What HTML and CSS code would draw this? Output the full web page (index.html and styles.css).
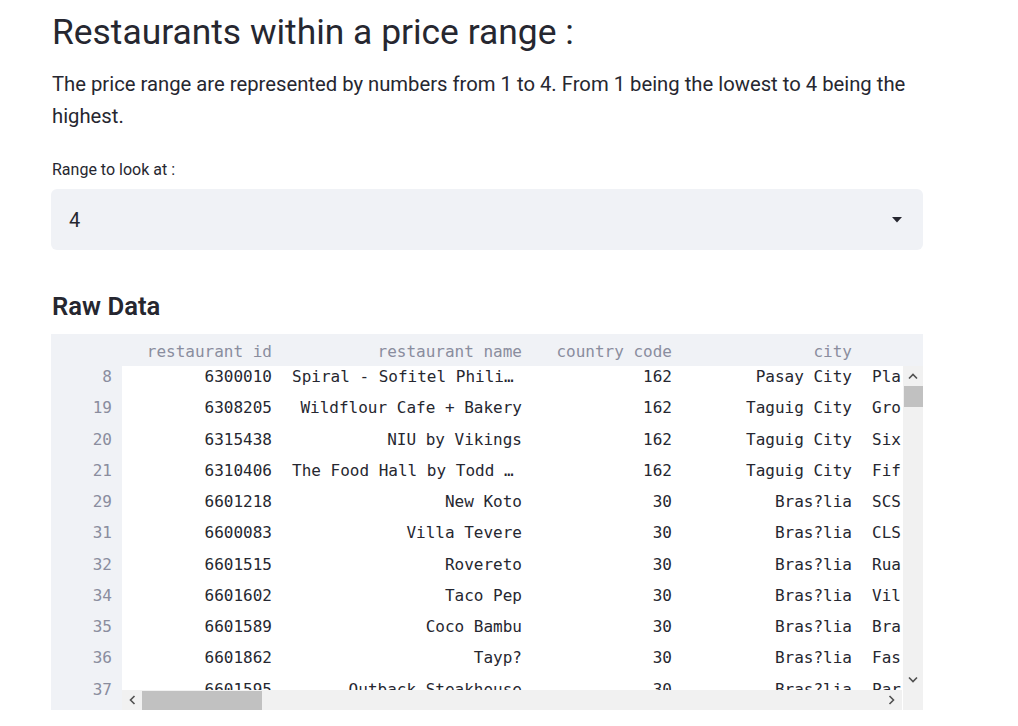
FILE: index.html
```html
<!DOCTYPE html>
<html>
<head>
<meta charset="utf-8">
<link rel="stylesheet" href="styles.css">
</head>
<body>
<main class="page">
  <h1 class="title">Restaurants within a price range :</h1>
  <p class="intro">The price range are represented by numbers from 1 to 4. From 1 being the lowest to 4 being the highest.</p>
  <label class="field-label">Range to look at :</label>
  <div class="select">
    <span class="select-value">4</span>
    <svg class="select-arrow" width="10" height="6" viewBox="0 0 10 6"><path d="M0 0H10L5 5.5Z" fill="#262730"/></svg>
  </div>
  <h3 class="section">Raw Data</h3>
  <div class="frame">
    <div class="head">
      <div class="hcell c1">restaurant id</div>
      <div class="hcell c2">restaurant name</div>
      <div class="hcell c3">country code</div>
      <div class="hcell c4">city</div>
    </div>
    <div class="corner-top"></div>
    <div class="index">
      <div class="icell">8</div><div class="icell">19</div><div class="icell">20</div><div class="icell">21</div><div class="icell">29</div><div class="icell">31</div><div class="icell">32</div><div class="icell">34</div><div class="icell">35</div><div class="icell">36</div><div class="icell">37</div>
    </div>
    <div class="body">
      <div class="row"><div class="cell c1">6300010</div><div class="cell c2 trunc">Spiral - Sofitel Phili…</div><div class="cell c3">162</div><div class="cell c4">Pasay City</div><div class="cell c5">Pla</div></div>
      <div class="row"><div class="cell c1">6308205</div><div class="cell c2">Wildflour Cafe + Bakery</div><div class="cell c3">162</div><div class="cell c4">Taguig City</div><div class="cell c5">Gro</div></div>
      <div class="row"><div class="cell c1">6315438</div><div class="cell c2">NIU by Vikings</div><div class="cell c3">162</div><div class="cell c4">Taguig City</div><div class="cell c5">Six</div></div>
      <div class="row"><div class="cell c1">6310406</div><div class="cell c2 trunc">The Food Hall by Todd …</div><div class="cell c3">162</div><div class="cell c4">Taguig City</div><div class="cell c5">Fif</div></div>
      <div class="row"><div class="cell c1">6601218</div><div class="cell c2">New Koto</div><div class="cell c3">30</div><div class="cell c4">Bras?lia</div><div class="cell c5">SCS</div></div>
      <div class="row"><div class="cell c1">6600083</div><div class="cell c2">Villa Tevere</div><div class="cell c3">30</div><div class="cell c4">Bras?lia</div><div class="cell c5">CLS</div></div>
      <div class="row"><div class="cell c1">6601515</div><div class="cell c2">Rovereto</div><div class="cell c3">30</div><div class="cell c4">Bras?lia</div><div class="cell c5">Rua</div></div>
      <div class="row"><div class="cell c1">6601602</div><div class="cell c2">Taco Pep</div><div class="cell c3">30</div><div class="cell c4">Bras?lia</div><div class="cell c5">Vil</div></div>
      <div class="row"><div class="cell c1">6601589</div><div class="cell c2">Coco Bambu</div><div class="cell c3">30</div><div class="cell c4">Bras?lia</div><div class="cell c5">Bra</div></div>
      <div class="row"><div class="cell c1">6601862</div><div class="cell c2">Tayp?</div><div class="cell c3">30</div><div class="cell c4">Bras?lia</div><div class="cell c5">Fas</div></div>
      <div class="row"><div class="cell c1">6601595</div><div class="cell c2">Outback Steakhouse</div><div class="cell c3">30</div><div class="cell c4">Bras?lia</div><div class="cell c5">Par</div></div>
    </div>
    <div class="vscroll">
      <svg class="arrow" width="10" height="7" viewBox="0 0 10 7"><path d="M1 5.5L5 1.5L9 5.5" fill="none" stroke="#505050" stroke-width="1.6"/></svg>
      <div class="vthumb"></div>
      <div class="spacer"></div>
      <svg class="arrow" width="10" height="7" viewBox="0 0 10 7"><path d="M1 1.5L5 5.5L9 1.5" fill="none" stroke="#505050" stroke-width="1.6"/></svg>
    </div>
    <div class="hscroll">
      <svg class="harrow" width="7" height="10" viewBox="0 0 7 10"><path d="M5.5 1L1.5 5L5.5 9" fill="none" stroke="#505050" stroke-width="1.6"/></svg>
      <div class="hthumb"></div>
      <div class="spacer"></div>
      <svg class="harrow" width="7" height="10" viewBox="0 0 7 10"><path d="M1.5 1L5.5 5L1.5 9" fill="none" stroke="#505050" stroke-width="1.6"/></svg>
    </div>
    <div class="corner"></div>
  </div>
</main>
</body>
</html>
```

FILE: styles.css
```css
html, body {
  margin: 0;
  padding: 0;
  background: #ffffff;
}
body {
  font-family: "Roboto", "Noto Sans", sans-serif;
  color: #262730;
}
.page {
  width: 872px;
  padding: 8px 0 0 51px;
  display: flex;
  flex-direction: column;
}
.title {
  font-weight: 400;
  font-size: 35.4px;
  line-height: 48px;
  margin: 0 0 0 1px;
  color: #262730;
}
.intro {
  font-size: 20.25px;
  line-height: 32px;
  margin: 12px 0 0 1px;
  color: #262730;
}
.field-label {
  font-size: 16px;
  line-height: 20px;
  margin: 28px 0 0 1px;
  color: #262730;
}
.select {
  margin-top: 9px;
  height: 61px;
  background: #f0f2f6;
  border-radius: 6px;
  display: flex;
  align-items: center;
  padding: 0 21px 0 18px;
}
.select-value {
  font-size: 20px;
  flex: 1;
}
.section {
  font-weight: 600;
  font-size: 25.7px;
  line-height: 36px;
  margin: 38px 0 0 1px;
  color: #262730;
}
.frame {
  margin-top: 10px;
  height: 376px;
  display: grid;
  grid-template-columns: 71px 780px 21px;
  grid-template-rows: 32px 324px 20px;
  background: #f0f2f6;
  font-family: "DejaVu Sans Mono", "Liberation Mono", monospace;
  font-size: 16px;
}
.head {
  grid-column: 2;
  grid-row: 1;
  display: flex;
  overflow: hidden;
  white-space: nowrap;
  color: #8a8d9e;
  align-items: center;
  padding-top: 2px;
}
.corner-top {
  grid-column: 3;
  grid-row: 1;
}
.index {
  grid-column: 1;
  grid-row: 2 / 4;
  overflow: hidden;
  color: #8a8d9e;
}
.icell {
  height: 31.25px;
  line-height: 22px;
  text-align: right;
  padding-right: 10px;
}
.body {
  grid-column: 2;
  grid-row: 2;
  background: #ffffff;
  overflow: hidden;
}
.row {
  display: flex;
  height: 31.25px;
  line-height: 22px;
  white-space: nowrap;
  color: #262730;
}
.cell, .hcell {
  flex: none;
  padding-right: 10px;
  box-sizing: border-box;
  text-align: right;
  overflow: hidden;
}
.c1 { width: 160px; }
.c2 { width: 250px; }
.c3 { width: 150px; }
.c4 { width: 180px; }
.c5 { width: 40px; text-align: left; padding: 0 0 0 10px; }
.trunc { text-align: left; padding-left: 10px; }
.vscroll {
  grid-column: 3;
  grid-row: 2;
  background: #f1f1f1;
  border-left: 1px solid #ffffff;
  display: flex;
  flex-direction: column;
  align-items: center;
}
.vscroll .arrow {
  margin: 7px 0;
}
.vthumb {
  width: 19px;
  height: 21px;
  background: #c1c1c1;
  margin-top: -1px;
}
.spacer { flex: 1; }
.hscroll {
  grid-column: 2;
  grid-row: 3;
  background: #f1f1f1;
  display: flex;
  align-items: center;
}
.harrow {
  margin: 0 7px;
}
.hthumb {
  width: 120px;
  height: 19px;
  background: #c1c1c1;
  margin-left: -1px;
}
.corner {
  grid-column: 3;
  grid-row: 3;
  background: #f1f1f1;
  border-left: 1px solid #ffffff;
}
```
